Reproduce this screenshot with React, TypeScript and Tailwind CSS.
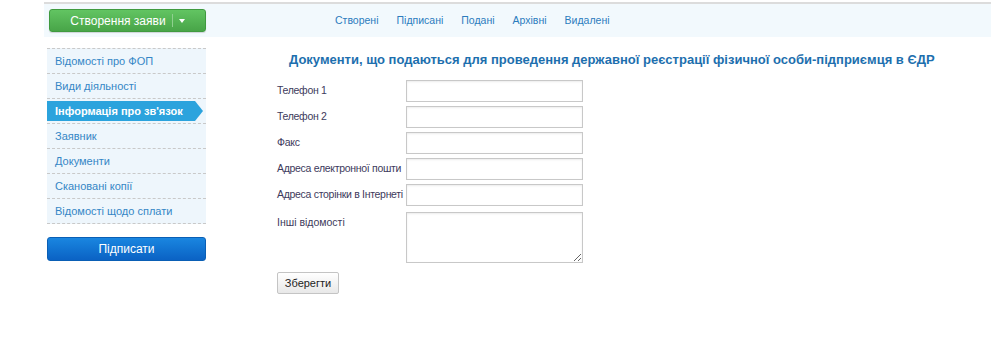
const NAV = ["Створені", "Підписані", "Подані", "Архівні", "Видалені"];

const MENU = [
  "Відомості про ФОП",
  "Види діяльності",
  "Інформація про зв'язок",
  "Заявник",
  "Документи",
  "Скановані копії",
  "Відомості щодо сплати",
];

const FIELDS = [
  "Телефон 1",
  "Телефон 2",
  "Факс",
  "Адреса електронної пошти",
  "Адреса сторінки в Інтернеті",
];

export default function App() {
  return (
    <div className="h-[349px] w-[1000px] bg-white font-['Liberation_Sans',Arial,sans-serif]">
      <div className="ml-[44px] w-[947px] pt-[2px]">
        <div className="h-[2px] border-t border-b border-[#dcdcdc] bg-[#f4f4f4]" />
        <div className="flex h-[33px] items-center bg-[#f2f9fd] pl-[5px]">
          <button
            type="button"
            className="flex h-[23px] w-[157px] items-center justify-center gap-[6px] rounded-[3px] border border-[#3f9a3f] bg-gradient-to-b from-[#62c462] to-[#48a548] text-[12px] text-white shadow-[0_1px_1px_rgba(0,0,0,0.15)]"
          >
            <span>Створення заяви</span>
            <span className="h-[13px] border-l border-[#8fd08f]" />
            <span className="mt-[1px] h-0 w-0 border-x-[3px] border-t-[4px] border-x-transparent border-t-white" />
          </button>
          <nav className="ml-[129px] flex gap-[18px] text-[10.5px] text-[#2c7cbd]">
            {NAV.map((n) => (
              <span key={n}>{n}</span>
            ))}
          </nav>
        </div>
      </div>

      <div className="mt-[11px] flex">
        <div className="ml-[47px] w-[159px]">
          <ul className="border-t border-dashed border-[#c9c9c9] bg-[#eef6fc] text-[11px] text-[#3586c6]">
            {MENU.map((m, i) =>
              i === 2 ? (
                <li key={m} className="relative h-[25px] border-b border-dashed border-[#c9c9c9] py-[2px]">
                  <div className="flex h-full w-[148px] items-center bg-[#2ba3dd] pl-[8px] font-bold text-white">
                    {m}
                  </div>
                  <span className="absolute top-[2px] left-[148px] h-0 w-0 border-y-[10px] border-l-[8px] border-y-transparent border-l-[#2ba3dd]" />
                </li>
              ) : (
                <li key={m} className="flex h-[25px] items-center border-b border-dashed border-[#c9c9c9] pl-[8px]">
                  {m}
                </li>
              )
            )}
          </ul>
          <button
            type="button"
            className="mt-[13px] h-[24px] w-[159px] rounded-[3px] border border-[#0a5fb5] bg-gradient-to-b from-[#1a86e0] to-[#0b62c4] text-[12px] text-white"
          >
            Підписати
          </button>
        </div>

        <div className="ml-[71px] flex-1 pr-[40px]">
          <h1 className="mt-[4px] pl-[12px] text-[13px] leading-[16px] font-bold text-[#1d6fae]">
            Документи, що подаються для проведення державної реєстрації фізичної особи-підприємця в ЄДР
          </h1>
          <div className="mt-[12px] flex flex-col gap-[4px] text-[10.5px] text-[#3d3a5c]">
            {FIELDS.map((f) => (
              <div key={f} className="flex items-center">
                <label className="w-[129px] whitespace-nowrap tracking-[-0.3px]">{f}</label>
                <input className="h-[22px] w-[177px] border border-[#c8c8c8] bg-white shadow-[inset_0_1px_2px_rgba(0,0,0,0.08)] outline-none" />
              </div>
            ))}
            <div className="mt-[2px] flex items-start">
              <label className="w-[129px] pt-[3px]">Інші відомості</label>
              <textarea className="h-[51px] w-[177px] border border-[#c8c8c8] bg-white shadow-[inset_0_1px_2px_rgba(0,0,0,0.08)] outline-none" />
            </div>
          </div>
          <button
            type="button"
            className="mt-[9px] h-[22px] w-[62px] rounded-[2px] border border-[#c4c4c4] bg-gradient-to-b from-white to-[#e8e8e8] text-[11px] text-[#222]"
          >
            Зберегти
          </button>
        </div>
      </div>
    </div>
  );
}
